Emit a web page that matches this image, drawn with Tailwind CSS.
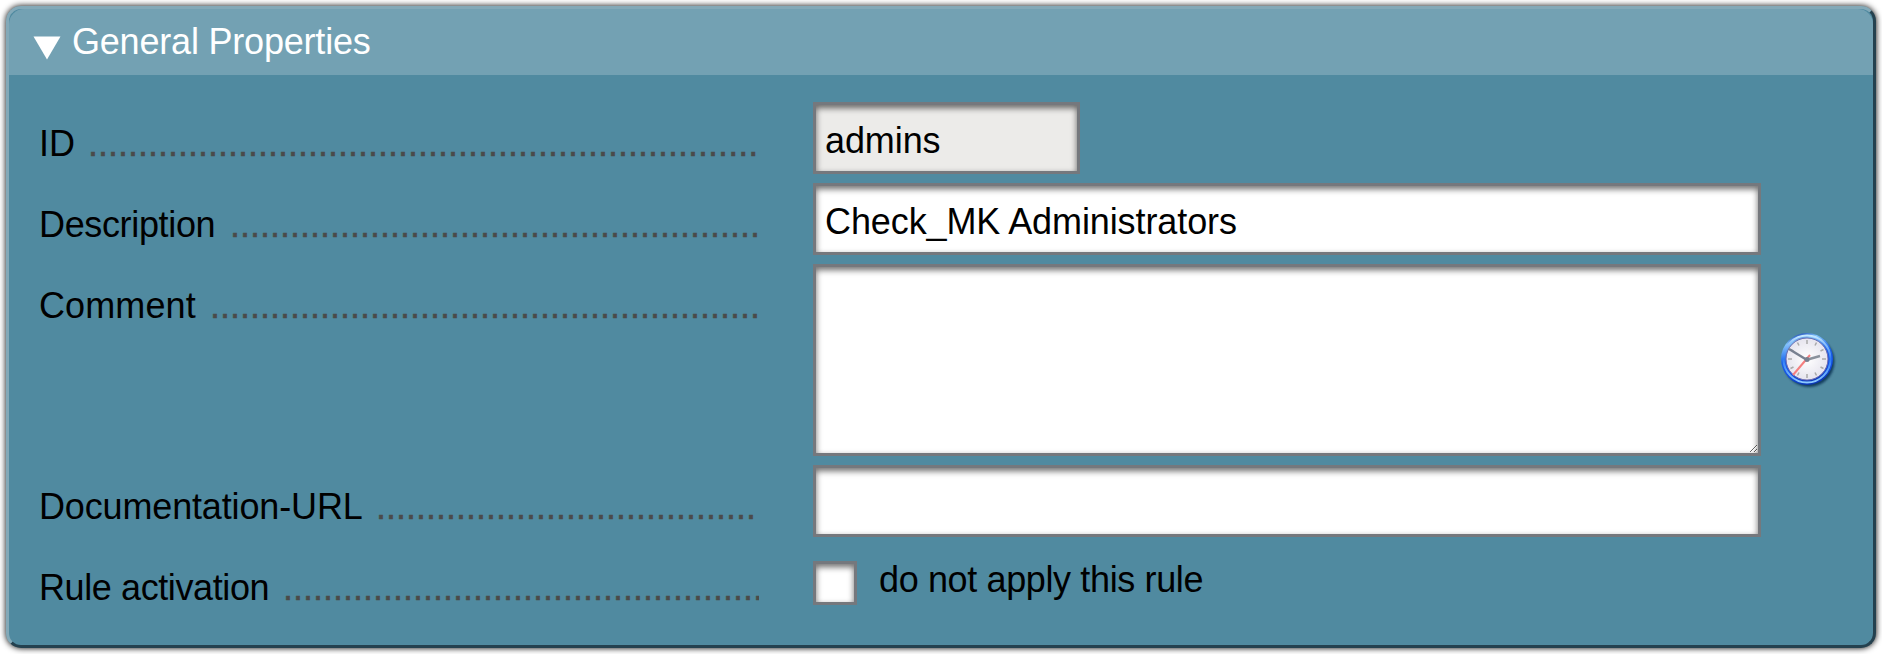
<!DOCTYPE html>
<html lang="en"><head><meta charset="utf-8"><title>General Properties</title>
<script src="https://cdn.jsdelivr.net/npm/@tailwindcss/browser@4"></script></head>
<body class="h-[654px] overflow-hidden bg-white pt-[6px] pl-[6px] font-['Liberation_Sans',Arial,sans-serif] text-[36px] leading-[42px] text-black">
<section class="h-[642px] w-[1870px] rounded-[15px] border-[3px] border-t-[#83a9b8] border-r-[#24414f] border-b-[#24414f] border-l-[#83a9b8] bg-[#508aa0] shadow-[0_0_6px_#000]">
  <h1 class="flex h-[66px] items-center rounded-t-[15px] bg-[#73a1b3] pl-[24px] text-white">
    <svg class="mt-[11px] h-[24px] w-[28px]" viewBox="0 0 28 24"><path d="M.5 .5H27.5L14 23.5Z" fill="#fff"/></svg>
    <span class="ml-[11px] tracking-[-0.2px]">General Properties</span>
  </h1>
  <div class="grid grid-cols-[775px_1fr] pt-[27px] pl-[29px]">
    <div class="flex h-[81px] w-[721px] overflow-hidden pt-[21px] pl-[1px]"><span class="w-[49px] shrink-0">ID</span><span class="text-[#4a4a4a] [-webkit-text-stroke:0.5px_#4a4a4a]">...................................................................</span></div>
    <div><input class="block h-[72px] w-[267px] border-[3px] border-[#75787d] bg-[#ecebe9] pt-[6px] pr-[8px] pl-[9px] tracking-[-0.1px] shadow-[inset_0_3px_6px_rgba(0,0,0,0.58)]" value="admins" readonly></div>
    <div class="flex h-[81px] w-[721px] overflow-hidden pt-[21px] pl-[1px]"><span class="w-[191px] shrink-0 tracking-[-0.35px]">Description</span><span class="text-[#4a4a4a] [-webkit-text-stroke:0.5px_#4a4a4a]">.....................................................</span></div>
    <div><input class="block h-[72px] w-[948px] border-[3px] border-[#75787d] bg-white pt-[6px] pr-[8px] pl-[9px] tracking-[-0.1px] shadow-[inset_0_3px_6px_rgba(0,0,0,0.58)]" value="Check_MK Administrators"></div>
    <div class="flex h-[201px] w-[721px] overflow-hidden pt-[21px] pl-[1px]"><span class="w-[171px] shrink-0 tracking-[0.1px]">Comment</span><span class="text-[#4a4a4a] [-webkit-text-stroke:0.5px_#4a4a4a]">.......................................................</span></div>
    <div class="flex items-start"><textarea class="block h-[192px] w-[948px] resize border-[3px] border-[#75787d] bg-white px-[8px] shadow-[inset_0_3px_6px_rgba(0,0,0,0.58)]"></textarea>
      <svg class="mt-[66px] ml-[17px] h-[60px] w-[60px]" viewBox="0 0 60 60">
        <defs><linearGradient id="rim" x1=".3" y1="0" x2=".6" y2="1"><stop offset="0" stop-color="#1741b5"/><stop offset=".15" stop-color="#7fc4fa"/><stop offset=".45" stop-color="#1b62e8"/><stop offset=".7" stop-color="#1250e6"/><stop offset="1" stop-color="#0b34b0"/></linearGradient>
        <linearGradient id="shine" x1="0" y1="0" x2="0" y2="1"><stop offset="0" stop-color="#c5e8ff"/><stop offset=".5" stop-color="#2b7af5"/><stop offset="1" stop-color="#8ccaff"/></linearGradient>
        <radialGradient id="face"><stop offset="0" stop-color="#fff"/><stop offset="1" stop-color="#e6e4ee"/></radialGradient>
        <filter id="soft"><feGaussianBlur stdDeviation="1.3"/></filter></defs>
        <circle cx="31" cy="31.5" r="25.5" fill="#06264a" opacity=".75" filter="url(#soft)"/>
        <circle cx="29" cy="29" r="26" fill="url(#rim)"/><circle cx="29" cy="29" r="23.5" fill="none" stroke="url(#shine)" stroke-width="2"/>
        <circle cx="29" cy="29" r="21" fill="url(#face)" stroke="#6a69b0"/>
        <path d="M29 10v4M29 44v4M10 29h4M44 29h4M19.5 12.5l1.5 3M38.5 12.5l-1.5 3M12.5 19.5l3 1.5M45.5 19.5l-3 1.5M12.5 38.5l3-1.5M45.5 38.5l-3-1.5M38.5 45.500l-1.500-3M19.500 45.500l1.500-3" stroke="#aaa" stroke-width="1.5"/>
        <path d="M32 25L15 45" stroke="#f57f7f" stroke-width="2"/><path d="M11 19L29 30" stroke="#788090" stroke-width="2.5"/><path d="M28 30L42 26" stroke="#8a919c" stroke-width="2.500"/><circle cx="29" cy="29.500" r="2.500" fill="#788090"/>
      </svg></div>
    <div class="flex h-[81px] w-[721px] overflow-hidden pt-[21px] pl-[1px]"><span class="w-[337px] shrink-0 tracking-[-0.15px]">Documentation-URL</span><span class="text-[#4a4a4a] [-webkit-text-stroke:0.5px_#4a4a4a]">......................................</span></div>
    <div><input class="block h-[72px] w-[948px] border-[3px] border-[#75787d] bg-white px-[8px] shadow-[inset_0_3px_6px_rgba(0,0,0,0.58)]"></div>
    <div class="flex h-[81px] w-[721px] overflow-hidden pt-[21px] pl-[1px]"><span class="w-[244px] shrink-0 tracking-[-0.4px]">Rule activation</span><span class="text-[#4a4a4a] [-webkit-text-stroke:0.5px_#4a4a4a]">................................................</span></div>
    <div class="flex items-start pt-[13px]"><input type="checkbox" class="mt-[2px] h-[44px] w-[44px] appearance-none border-[3px] border-[#75787d] bg-white shadow-[inset_0_3px_6px_rgba(0,0,0,0.58)]"><span class="ml-[22px] tracking-[-0.37px]">do not apply this rule</span></div>
  </div>
</section>
</body></html>
